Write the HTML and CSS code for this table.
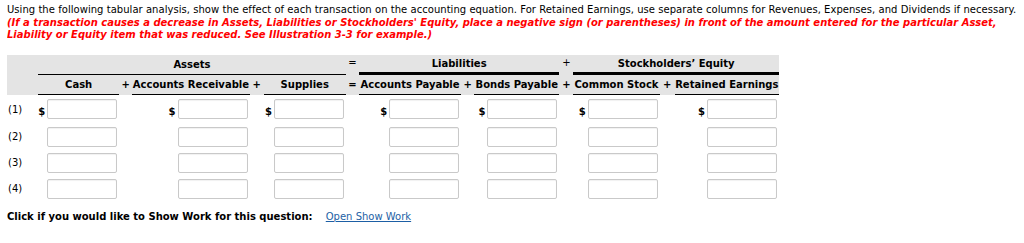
FILE: index.html
```html
<!DOCTYPE html>
<html lang="en">
<head>
    <meta charset="UTF-8">
    <title>Tabular Analysis</title>
    <link rel="stylesheet" href="styles.css">
</head>
<body>
    <div class="question">
        <p class="prompt">Using the following tabular analysis, show the effect of each transaction on the accounting equation. For Retained Earnings, use separate columns for Revenues, Expenses, and Dividends if necessary.</p>
        <p class="hint">(If a transaction causes a decrease in Assets, Liabilities or Stockholders' Equity, place a negative sign (or parentheses) in front of the amount entered for the particular Asset, Liability or Equity item that was reduced. See Illustration 3-3 for example.)</p>
    </div>

    <table class="analysis">
        <colgroup>
            <col class="c-label">
            <col class="c-cash">
            <col class="c-op">
            <col class="c-ar">
            <col class="c-op2">
            <col class="c-sup">
            <col class="c-op">
            <col class="c-ap">
            <col class="c-op">
            <col class="c-bp">
            <col class="c-op2">
            <col class="c-cs">
            <col class="c-op3">
            <col class="c-re">
        </colgroup>
        <thead>
            <tr class="group">
                <th></th>
                <th colspan="5" class="thin">Assets</th>
                <th class="op">=</th>
                <th colspan="3" class="thick">Liabilities</th>
                <th class="op">+</th>
                <th colspan="3" class="thick">Stockholders&rsquo; Equity</th>
            </tr>
            <tr class="cols">
                <th></th>
                <th class="under">Cash</th>
                <th class="op">+</th>
                <th class="under">Accounts Receivable</th>
                <th class="op">+</th>
                <th class="under">Supplies</th>
                <th class="op">=</th>
                <th class="under">Accounts Payable</th>
                <th class="op">+</th>
                <th class="under">Bonds Payable</th>
                <th class="op">+</th>
                <th class="under">Common Stock</th>
                <th class="op">+</th>
                <th class="under">Retained Earnings</th>
            </tr>
        </thead>
        <tbody>
            <tr class="first">
                <td class="num">(1)</td>
                <td class="cell"><span class="dollar">$</span><input type="text"></td>
                <td></td>
                <td class="cell"><span class="dollar">$</span><input type="text"></td>
                <td></td>
                <td class="cell"><span class="dollar">$</span><input type="text"></td>
                <td></td>
                <td class="cell"><span class="dollar">$</span><input type="text"></td>
                <td></td>
                <td class="cell"><span class="dollar">$</span><input type="text"></td>
                <td></td>
                <td class="cell"><span class="dollar">$</span><input type="text"></td>
                <td></td>
                <td class="cell"><span class="dollar">$</span><input type="text"></td>
            </tr>
            <tr>
                <td class="num">(2)</td>
                <td class="cell"><input type="text"></td>
                <td></td>
                <td class="cell"><input type="text"></td>
                <td></td>
                <td class="cell"><input type="text"></td>
                <td></td>
                <td class="cell"><input type="text"></td>
                <td></td>
                <td class="cell"><input type="text"></td>
                <td></td>
                <td class="cell"><input type="text"></td>
                <td></td>
                <td class="cell"><input type="text"></td>
            </tr>
            <tr>
                <td class="num">(3)</td>
                <td class="cell"><input type="text"></td>
                <td></td>
                <td class="cell"><input type="text"></td>
                <td></td>
                <td class="cell"><input type="text"></td>
                <td></td>
                <td class="cell"><input type="text"></td>
                <td></td>
                <td class="cell"><input type="text"></td>
                <td></td>
                <td class="cell"><input type="text"></td>
                <td></td>
                <td class="cell"><input type="text"></td>
            </tr>
            <tr>
                <td class="num">(4)</td>
                <td class="cell"><input type="text"></td>
                <td></td>
                <td class="cell"><input type="text"></td>
                <td></td>
                <td class="cell"><input type="text"></td>
                <td></td>
                <td class="cell"><input type="text"></td>
                <td></td>
                <td class="cell"><input type="text"></td>
                <td></td>
                <td class="cell"><input type="text"></td>
                <td></td>
                <td class="cell"><input type="text"></td>
            </tr>
        </tbody>
    </table>

    <div class="showwork">
        <span class="ask">Click if you would like to Show Work for this question:</span>
        <a href="#" class="open">Open Show Work</a>
    </div>
</body>
</html>
```

FILE: styles.css
```css
body {
    margin: 4px 7px;
    font-family: "DejaVu Sans", Verdana, sans-serif;
    font-size: 10px;
    color: #000;
    background-color: #fff;
}

.question p {
    margin: 0;
    line-height: 12.5px;
}

.prompt {
    letter-spacing: 0.04px;
}

.hint {
    color: #f00;
    font-weight: bold;
    font-style: italic;
}

.analysis {
    margin-top: 13px;
    border-collapse: separate;
    border-spacing: 0;
    table-layout: fixed;
    width: 772px;
}

.c-label { width: 31px; }
.c-cash  { width: 81px; }
.c-op    { width: 13px; }
.c-op2   { width: 14px; }
.c-op3   { width: 15px; }
.c-ar    { width: 117px; }
.c-sup   { width: 82px; }
.c-ap    { width: 102px; }
.c-bp    { width: 85px; }
.c-cs    { width: 86px; }
.c-re    { width: 104px; }

.analysis thead tr {
    background-color: #e4e4e4;
}

.analysis th {
    padding: 0;
    font-weight: bold;
    text-align: center;
    white-space: nowrap;
}

.analysis th.op {
    font-weight: normal;
}

/* group row: Assets = Liabilities + Equity */
.group th {
    height: 17px;
    vertical-align: middle;
}

.group th.op {
    vertical-align: top;
    padding-top: 2px;
}

.group .thin {
    border-bottom: 1px solid #000;
}

.group .thick {
    border-bottom: 3px solid #000;
}

.cols th {
    height: 19px;
    vertical-align: middle;
}

.cols th.under {
    border-bottom: 1px solid #000;
}

.cols th.op {
    font-weight: bold;
}

.analysis td {
    padding: 0;
    height: 26px;
}

.analysis tr.first td {
    height: 25px;
    padding-top: 4px;
    vertical-align: top;
}

.num {
    font-size: 10px;
    padding-left: 1px !important;
}

.analysis tr.first td.num {
    height: 20px;
    padding-top: 9px;
}

.cell {
    text-align: right;
    padding-right: 2px !important;
    white-space: nowrap;
}

.dollar {
    font-size: 10px;
    font-weight: bold;
    vertical-align: -3px;
    margin-right: 2px;
}

.cell input {
    box-sizing: border-box;
    width: 70px;
    height: 20px;
    margin: 0;
    padding: 0 3px;
    border: 1px solid #c9c9c9;
    border-radius: 2px;
    box-shadow: inset 0 1px 1px rgba(0, 0, 0, 0.06);
    vertical-align: middle;
}

.showwork {
    margin-top: 9px;
    font-size: 10px;
}

.ask {
    font-weight: bold;
    margin-right: 10px;
}

.open {
    color: #1d5fa5;
    text-decoration: underline;
}
```
